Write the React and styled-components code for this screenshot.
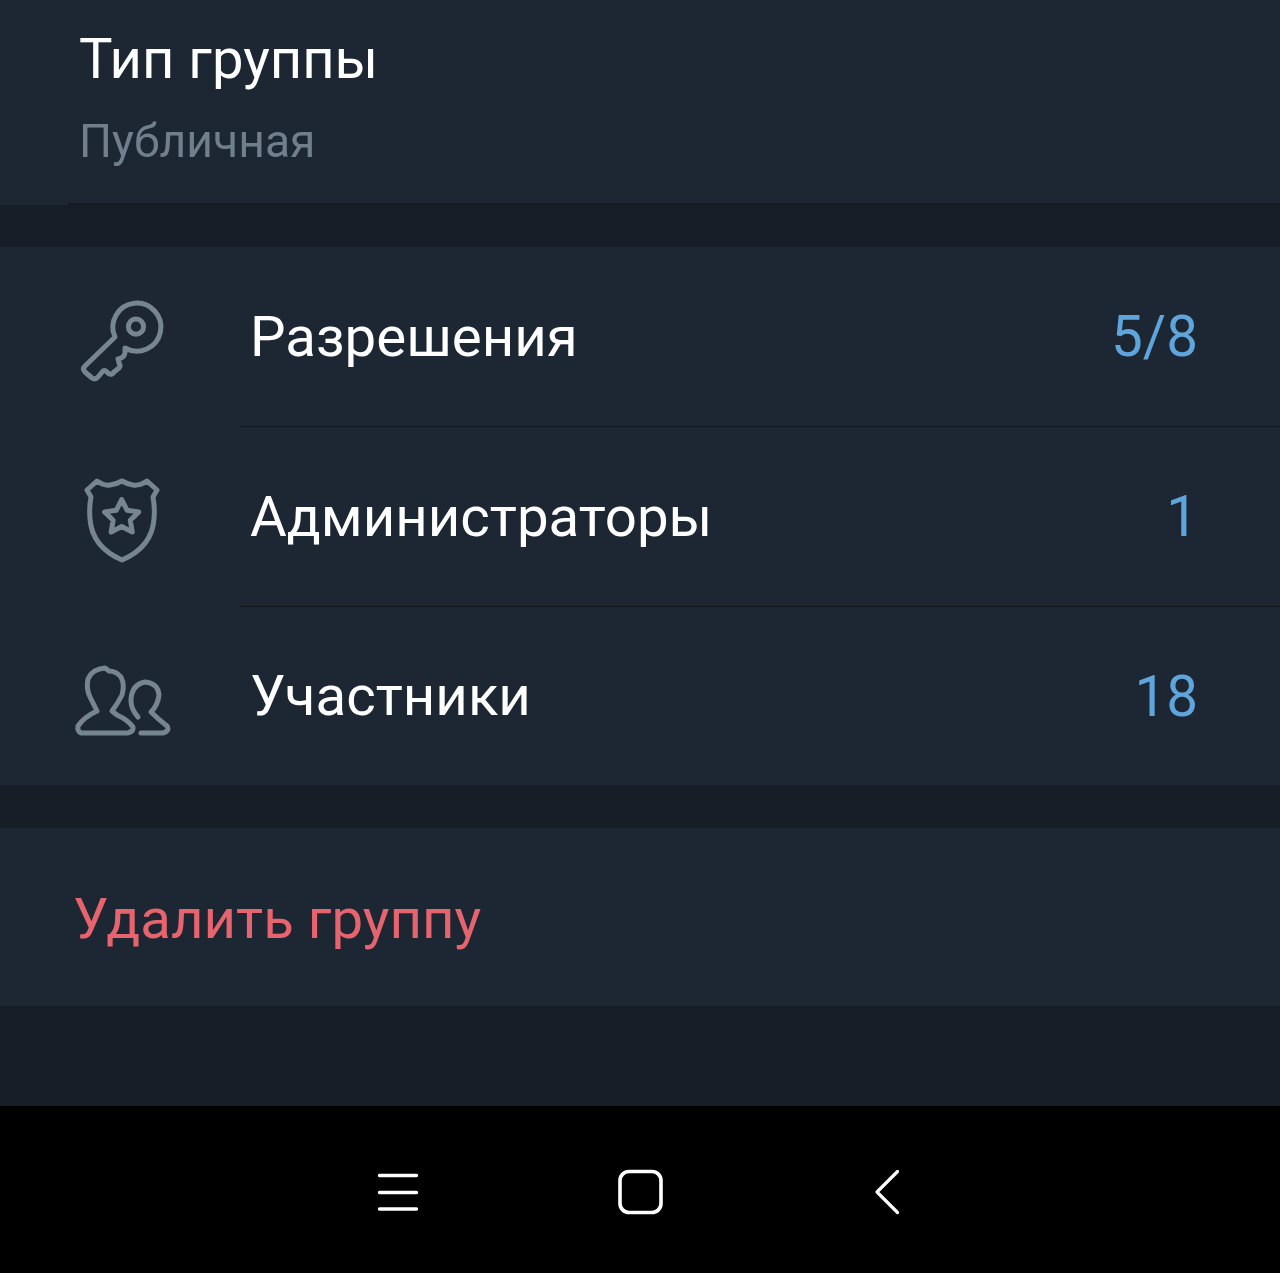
import React from "react";
import styled, { createGlobalStyle } from "styled-components";

const Global = createGlobalStyle`
  html, body { margin: 0; padding: 0; background: #161e28; }
  body { font-family: Roboto, "Noto Sans", sans-serif; }
`;

const Page = styled.div`
  width: 1280px;
  height: 1273px;
  display: flex;
  flex-direction: column;
  background: #161e28;
  overflow: hidden;
  filter: blur(0.6px);
`;

const Section = styled.section`
  background: #1d2734;
  margin-bottom: ${(p) => p.$gap}px;
`;

const TypeBlock = styled.div`
  height: 203px;
  box-sizing: border-box;
  padding: 29px 0 0 79px;
`;

const TypeDivider = styled.div`
  height: 2px;
  margin-left: 68px;
  background: #131a23;
`;

const TypeTitle = styled.div`
  font-size: 56.2px;
  line-height: 60px;
  color: #ffffff;
`;

const TypeValue = styled.div`
  margin-top: 27px;
  font-size: 46.3px;
  line-height: 50px;
  color: #717f8d;
`;

const Row = styled.div`
  height: ${(p) => (p.$last ? 178 : 180)}px;
  display: flex;
  align-items: stretch;
`;

const Leading = styled.div`
  width: 240px;
  flex: none;
  box-sizing: border-box;
  padding-left: 72px;
  display: flex;
  align-items: center;
`;

const RowBody = styled.div`
  flex: 1;
  display: flex;
  align-items: center;
  justify-content: space-between;
  box-sizing: border-box;
  padding: 0 82px 0 10px;
  border-bottom: ${(p) => (p.$last ? "none" : "1px solid #10161e")};
`;

const RowLabel = styled.span`
  font-size: 56.4px;
  color: #ffffff;
`;

const RowCount = styled.span`
  font-size: 56.6px;
  color: #5ea5dc;
`;

const DeleteRow = styled.div`
  height: 178px;
  box-sizing: border-box;
  padding: 3px 0 0 73px;
  display: flex;
  align-items: center;
  font-size: 56.4px;
  color: #e5646e;
`;

const Filler = styled.div`
  flex: 1;
`;

const NavBar = styled.nav`
  height: 167px;
  flex: none;
  background: #000000;
  display: grid;
  grid-template-columns: repeat(3, 245px);
  justify-content: center;
  align-items: center;
`;

const NavSlot = styled.div`
  display: flex;
  justify-content: center;
`;

const Glyph = styled.svg`
  display: block;
  fill: none;
  stroke: ${(p) => p.$color};
  stroke-width: ${(p) => p.$weight}px;
  stroke-linecap: round;
  stroke-linejoin: round;
`;

const starPoints = Array.from({ length: 10 }, (_, i) => {
  const r = i % 2 === 0 ? 18 : 9;
  const a = (i * Math.PI) / 5 - Math.PI / 2;
  return `${(49.7 + r * Math.cos(a)).toFixed(1)},${(50.5 + r * Math.sin(a)).toFixed(1)}`;
}).join(" ");

const IconFrame = ({ children }) => (
  <Glyph width="100" height="100" viewBox="0 0 100 100" $color="#76858f" $weight={5}>
    {children}
  </Glyph>
);

const KeyIcon = () => (
  <IconFrame>
    <path d="M43 50 L13 79 Q10 82 13 85 L20 91 Q23 93 26 90 L31 84 Q33 83 35 85 L37 87 Q40 88 42 85 L47 81 Q49 79 47 76 L46 72 Q52 71 53 66 L53 61 A24 24 0 1 0 43 50 Z" />
    <circle cx="64" cy="39.7" r="7.6" />
  </IconFrame>
);

const BadgeIcon = () => (
  <IconFrame>
    <path d="M15 23 L25 14 Q32 19 38 18 Q45 17 50 14 Q55 17 61 18 Q68 19 75 14 L85 23 L81 30 Q83 40 82 52 Q80 80 50 93 Q20 80 18 52 Q17 40 19 30 Z" />
    <polygon points={starPoints} />
  </IconFrame>
);

const PeopleIcon = () => (
  <IconFrame>
    <path d="M9 87 L56 87 Q62 85 61 81 Q56 74 45 69 L40 65 Q46 57 50 49 Q53 39 49 31 Q44 25 37 25 L33 22 Q20 23 16 33 Q14 43 18 51 Q21 57 25 65 Q12 71 6 80 Q5 85 9 87 Z" />
    <path d="M66 71 Q59 63 59 55 Q59 39 73 36 Q86 37 87 49 Q86 59 79 66 Q86 73 95 80 Q98 85 91 87 L69 87" />
  </IconFrame>
);

const rows = [
  { label: "Разрешения", count: "5/8", Icon: KeyIcon },
  { label: "Администраторы", count: "1", Icon: BadgeIcon },
  { label: "Участники", count: "18", Icon: PeopleIcon },
];

export default function App() {
  return (
    <Page>
      <Global />
      <Section $gap={42}>
        <TypeBlock>
          <TypeTitle>Тип группы</TypeTitle>
          <TypeValue>Публичная</TypeValue>
        </TypeBlock>
        <TypeDivider />
      </Section>
      <Section $gap={43}>
        {rows.map(({ label, count, Icon }, i) => (
          <Row key={label} $last={i === rows.length - 1}>
            <Leading>
              <Icon />
            </Leading>
            <RowBody $last={i === rows.length - 1}>
              <RowLabel>{label}</RowLabel>
              <RowCount>{count}</RowCount>
            </RowBody>
          </Row>
        ))}
      </Section>
      <Section $gap={0}>
        <DeleteRow>Удалить группу</DeleteRow>
      </Section>
      <Filler />
      <NavBar>
        <NavSlot>
          <Glyph width="60" height="60" viewBox="0 0 60 60" $color="#ffffff" $weight={3.4}>
            <path d="M14.5 15.5 H51.5 M14.5 32.5 H51.5 M14.5 49 H51.5" />
          </Glyph>
        </NavSlot>
        <NavSlot>
          <Glyph width="60" height="60" viewBox="0 0 60 60" $color="#ffffff" $weight={3.6}>
            <rect x="10" y="11.5" width="41" height="41" rx="9" />
          </Glyph>
        </NavSlot>
        <NavSlot>
          <Glyph width="60" height="60" viewBox="0 0 60 60" $color="#ffffff" $weight={3.2}>
            <path d="M42.5 11.5 L22 32 L42.5 52.5" />
          </Glyph>
        </NavSlot>
      </NavBar>
    </Page>
  );
}
